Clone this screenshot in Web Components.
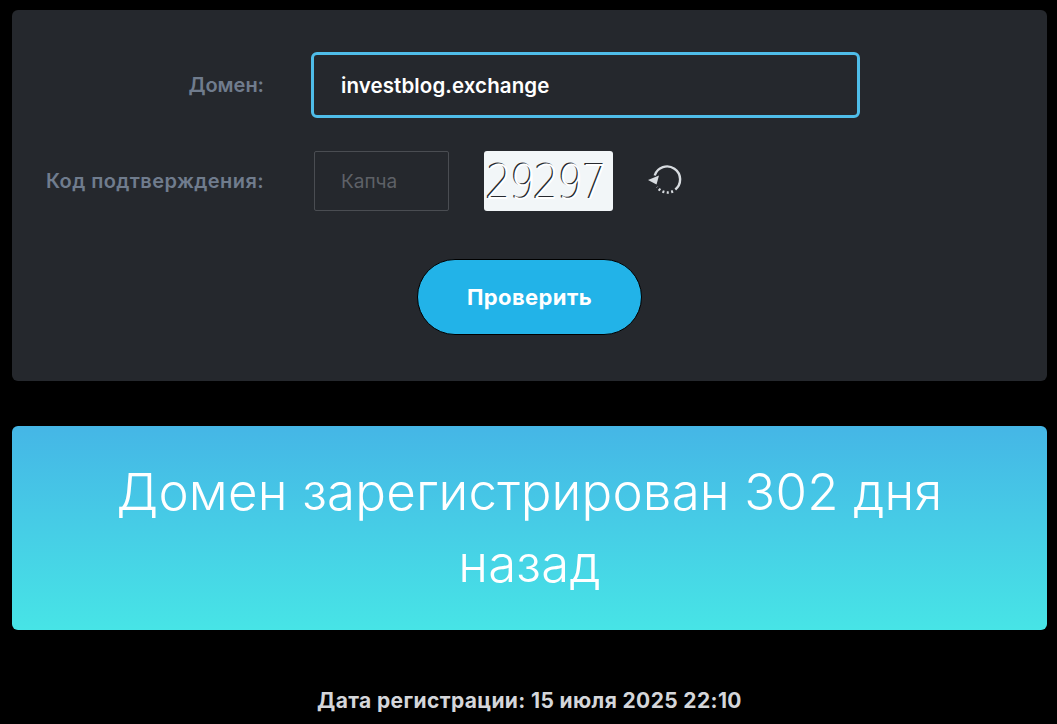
<!DOCTYPE html>
<html lang="ru"><head><meta charset="utf-8"><title>Домен</title>
<style>
html,body{margin:0;padding:0;background:#000;height:724px;overflow:hidden;font-family:Inter,"Open Sans",sans-serif}
</style></head><body>
<check-page>
<check-form></check-form>
<age-banner>Домен зарегистрирован 302 дня назад</age-banner>
<reg-date>Дата регистрации: 15 июля 2025 22:10</reg-date>
</check-page>
<script>
function def(name,html){customElements.define(name,class extends HTMLElement{constructor(){super();this.attachShadow({mode:'open'}).innerHTML=html}})}
def('check-page',`<style>:host{display:flex;flex-direction:column;padding:10px 10px 0 12px}</style><slot></slot>`);
def('form-row',`<style>:host{display:flex;align-items:center}
.l{width:252px;text-align:right;font-size:20px;font-weight:600;color:#707c8d;white-space:nowrap}
.c{display:flex;align-items:center;margin-left:50px}</style><div class="l"><slot name="label"></slot></div><div class="c"><slot></slot></div>`);
def('check-button',`<style>:host{display:block}
button{display:block;width:225px;height:76px;border-radius:38px;border:1px solid #000;background:#22b3e8;color:#fff;font:700 22px Inter,sans-serif;padding:0;letter-spacing:.4px}</style><button><slot></slot></button>`);
def('reload-icon',`<style>:host{display:block;width:36px;height:34px;margin-left:35px}svg{display:block}</style>
<svg width="36" height="34" viewBox="0 1.5 36 34" fill="none" stroke="#d8dce0" stroke-width="2.4"><path d="M6.7 13A13 13 0 1 1 27.3 27"/><path d="M25 28.8A13 13 0 0 1 9 24.5" stroke-width="2.6" stroke-dasharray="2 2.4"/><path d="M0 17.5L11 13L8.5 22Z" fill="#d8dce0" stroke="none"/></svg>`);
def('captcha-image',`<style>:host{display:block;position:relative;width:129px;height:60px;margin-left:35px;background:#f2f6f8;border-radius:3px;overflow:hidden}
.t,.t::after{display:block;font:300 48px/60px "DejaVu Sans",sans-serif;letter-spacing:-2.6px;white-space:nowrap}
.t{color:#26292e;width:150px;transform-origin:0 50%;transform:translateX(1px) scaleX(.85) skewX(-4deg)}
.t::after{content:"29297";position:absolute;left:1.6px;top:1px;color:#fff}
</style><span class="t">29297</span>`);
def('check-form',`<style>:host{display:block;height:371px;box-sizing:border-box;background:#25282d;border-radius:6px;padding-top:42px;width:1035px}
.d{width:549px;height:66px;box-sizing:border-box;border:3px solid #4fbde9;border-radius:6px;background:#25282d;color:#fff;font:600 20.5px Inter,sans-serif;letter-spacing:.1px;padding:0 27px;display:flex;align-items:center;margin-left:-3px}
.k{width:135px;height:60px;box-sizing:border-box;border:1px solid #4a4d52;border-radius:2px;color:#5e6167;font:400 19px Inter,sans-serif;padding-left:26px;display:flex;align-items:center}
.r2{margin-top:33px}.b{display:flex;justify-content:center;margin-top:48px}
</style>
<form-row><span slot="label">Домен:</span><div class="d">investblog.exchange</div></form-row>
<form-row class="r2"><span slot="label" style="letter-spacing:.42px">Код подтверждения:</span><div class="k">Капча</div><captcha-image></captcha-image><reload-icon></reload-icon></form-row>
<div class="b"><check-button>Проверить</check-button></div>`);
def('age-banner',`<style>:host{display:block;width:1035px;height:204px;box-sizing:border-box;margin-top:45px;border-radius:6px;background:linear-gradient(#45b6e6,#47e4e6);color:#fff;font-size:51px;font-weight:300;letter-spacing:.2px;line-height:72px;text-align:center;padding:30px 90px}</style><slot></slot>`);
def('reg-date',`<style>:host{display:block;width:1035px;margin-top:57px;text-align:center;color:#d4d6da;font-size:21px;font-weight:700;letter-spacing:.37px;line-height:28px}</style><slot></slot>`);
</script>
</body></html>
